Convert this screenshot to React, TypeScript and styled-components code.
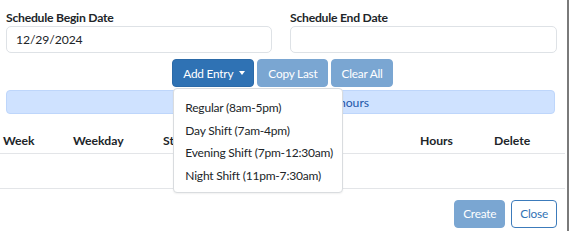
import React from "react";
import styled, { createGlobalStyle } from "styled-components";

const Global = createGlobalStyle`
  html, body { margin: 0; padding: 0; background: #fff; }
  body { font-family: Lato, "Noto Sans", sans-serif; color: #212529; }
  * { box-sizing: border-box; }
`;

const Frame = styled.div`
  width: 570px;
  height: 231px;
  display: flex;
  overflow: hidden;
`;

const Modal = styled.div`
  width: 569px;
  height: 231px;
  display: flex;
  flex-direction: column;
  border-right: 2px solid #7a7a7a;
`;

const Body = styled.div`
  padding: 9px 12px 0 6px;
  display: flex;
  flex-direction: column;
`;

const FormRow = styled.div`
  display: grid;
  grid-template-columns: 266px 267px;
  column-gap: 18px;
`;

const Field = styled.div`
  display: flex;
  flex-direction: column;
`;

const Label = styled.label`
  font-size: 12.2px;
  font-weight: 700;
  letter-spacing: -0.25px;
  line-height: 17px;
`;

const Input = styled.div`
  height: 27px;
  border: 1px solid #dee2e6;
  border-radius: 5px;
  padding: 0 9px;
  font-size: 12.2px;
  letter-spacing: -0.1px;
  display: flex;
  align-items: center;
`;

const Toolbar = styled.div`
  display: flex;
  justify-content: center;
  gap: 3px;
  margin-top: 6px;
  padding-left: 4px;
`;

const DropWrap = styled.div`
  position: relative;
  display: flex;
`;

const Btn = styled.button<{ $variant: "primary" | "disabled" | "outline"; $compact?: boolean }>`
  height: 28px;
  padding: ${(p) => (p.$compact ? "0 8px" : "0 9px 0 10px")};
  border-radius: 4px;
  font-family: inherit;
  font-size: 11.8px;
  letter-spacing: -0.2px;
  display: inline-flex;
  align-items: center;
  gap: 6px;
  cursor: pointer;
  border: 1px solid
    ${(p) => (p.$variant === "primary" ? "#2b6aa8" : p.$variant === "disabled" ? "#7aa6d2" : "#3c7bbb")};
  background: ${(p) => (p.$variant === "primary" ? "#2f72b4" : p.$variant === "disabled" ? "#7aa6d2" : "#fff")};
  color: ${(p) => (p.$variant === "outline" ? "#2f72b4" : "#fff")};
`;

const Caret = styled.span`
  width: 0;
  height: 0;
  margin-right: -1px;
  border-left: 3.5px solid transparent;
  border-right: 3.5px solid transparent;
  border-top: 4px solid #fff;
`;

const Menu = styled.div`
  position: absolute;
  left: 1px;
  top: 29px;
  width: 170px;
  height: 105px;
  background: #fff;
  border: 1px solid #d9dcdf;
  border-radius: 4px;
  box-shadow: 0 1px 2px rgba(0, 0, 0, 0.06);
  padding: 7px 0;
  z-index: 2;
`;

const MenuItem = styled.div`
  height: 22.7px;
  padding: 0 11px;
  font-size: 12px;
  letter-spacing: -0.2px;
  display: flex;
  align-items: center;
  color: #212529;
  white-space: nowrap;
`;

const Alert = styled.div`
  margin-top: 3px;
  height: 24px;
  background: #cfe2ff;
  border: 1px solid #bed6fb;
  border-radius: 4px;
  color: #2256a8;
  font-size: 12.2px;
  display: flex;
  align-items: center;
  justify-content: center;
`;

const Table = styled.table`
  width: 565px;
  border-collapse: collapse;
  margin-top: 14px;
  font-size: 12.2px;
`;

const Th = styled.th<{ $w: number }>`
  width: ${(p) => p.$w}px;
  text-align: left;
  font-weight: 700;
  padding: 0 3px;
  height: 25px;
  vertical-align: middle;
  border-bottom: 1px solid #e3e5e8;
  white-space: nowrap;
`;

const Td = styled.td`
  height: 35px;
  border-bottom: 1px solid #e3e5e8;
`;

const Footer = styled.div`
  display: flex;
  justify-content: flex-end;
  gap: 6px;
  padding: 11px 10px 0 0;
`;

export default function App() {
  return (
    <>
      <Global />
      <Frame>
        <Modal>
          <Body>
            <FormRow>
              <Field>
                <Label>Schedule Begin Date</Label>
                <Input>12/29/2024</Input>
              </Field>
              <Field>
                <Label>Schedule End Date</Label>
                <Input />
              </Field>
            </FormRow>
            <Toolbar>
              <DropWrap>
                <Btn $variant="primary">
                  Add Entry <Caret />
                </Btn>
                <Menu>
                  <MenuItem>Regular (8am-5pm)</MenuItem>
                  <MenuItem>Day Shift (7am-4pm)</MenuItem>
                  <MenuItem>Evening Shift (7pm-12:30am)</MenuItem>
                  <MenuItem>Night Shift (11pm-7:30am)</MenuItem>
                </Menu>
              </DropWrap>
              <Btn $variant="disabled">Copy Last</Btn>
              <Btn $variant="disabled">Clear All</Btn>
            </Toolbar>
            <Alert>Total Scheduled Time: 0.00 hours</Alert>
          </Body>
          <Table>
            <thead>
              <tr>
                <Th $w={70}>Week</Th>
                <Th $w={90}>Weekday</Th>
                <Th $w={90}>Start</Th>
                <Th $w={167}>Break (min)</Th>
                <Th $w={74}>Hours</Th>
                <Th $w={74}>Delete</Th>
              </tr>
            </thead>
            <tbody>
              <tr>
                <Td colSpan={6} />
              </tr>
            </tbody>
          </Table>
          <Footer>
            <Btn $variant="disabled" $compact>Create</Btn>
            <Btn $variant="outline" $compact>Close</Btn>
          </Footer>
        </Modal>
      </Frame>
    </>
  );
}
